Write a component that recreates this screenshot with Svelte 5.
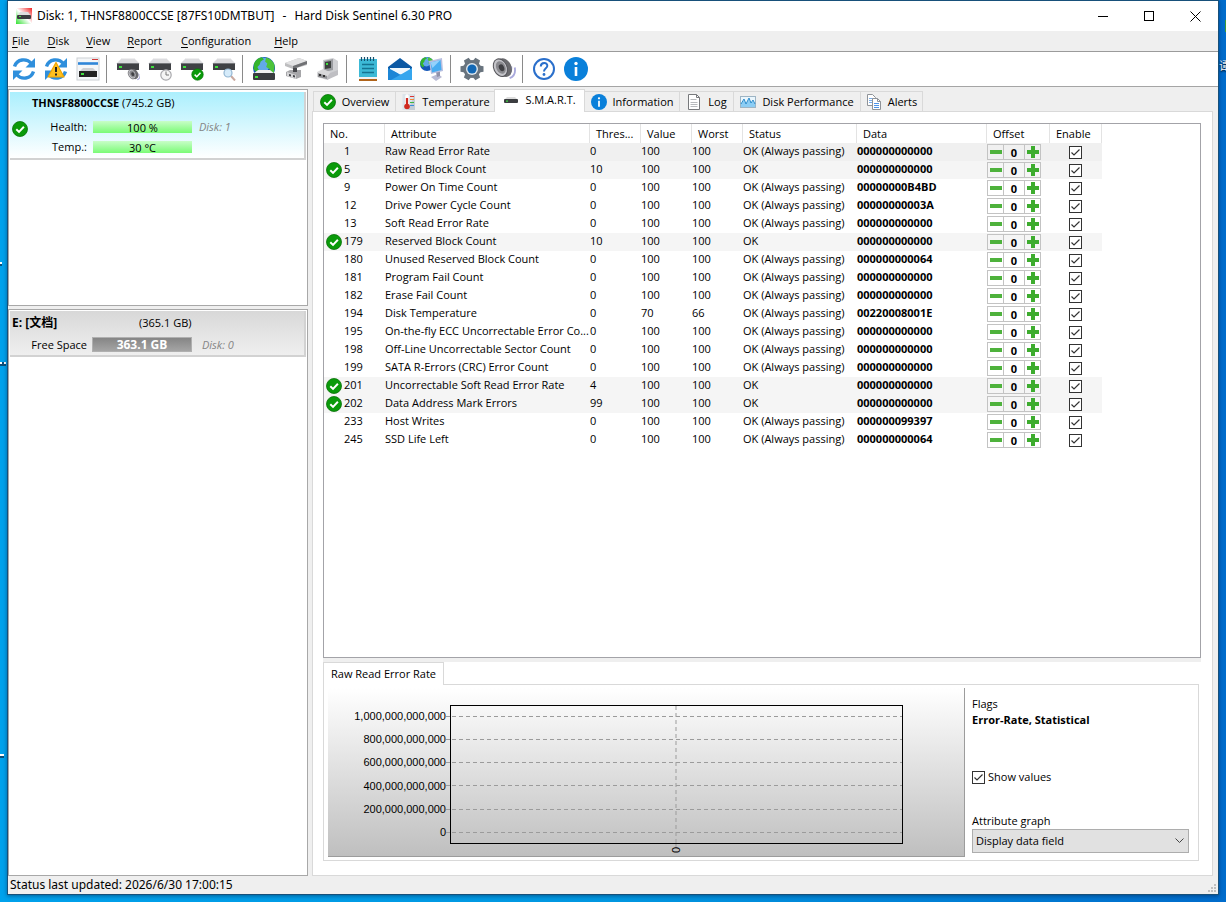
<script>
  const menus = [
    { label: 'File', gap: 18 },
    { label: 'Disk', gap: 17 },
    { label: 'View', gap: 17 },
    { label: 'Report', gap: 19 },
    { label: 'Configuration', gap: 23 },
    { label: 'Help', gap: 0 }
  ];

  const tools = [
    ['refresh', 'Refresh'], ['refreshWarn', 'Rescan'], ['panel', 'Disk panel'], null,
    ['diskSound', 'Acoustic'], ['diskClock', 'Short test'], ['diskOk', 'Extended test'], ['diskFind', 'Surface test'], null,
    ['globe', 'Network disk'], ['plug', 'Connectors'], ['dock', 'Docking'], null,
    ['note', 'Report'], ['mail', 'Send report'], ['net', 'Remote'], null,
    ['gear', 'Configuration'], ['speaker', 'Sounds'], null,
    ['help', 'Help'], ['info', 'About']
  ];

  const tabs = [
    { icon: 'ok', label: 'Overview', width: 83 },
    { icon: 'thermo', label: 'Temperature', width: 100 },
    { icon: 'drive', label: 'S.M.A.R.T.', width: 91 },
    { icon: 'info', label: 'Information', width: 96 },
    { icon: 'log', label: 'Log', width: 55 },
    { icon: 'perf', label: 'Disk Performance', width: 128 },
    { icon: 'copy', label: 'Alerts', width: 63 }
  ];
  let activeTab = $state('S.M.A.R.T.');

  const columns = [
    ['No.', 61], ['Attribute', 205], ['Thres...', 51], ['Value', 51], ['Worst', 51],
    ['Status', 114], ['Data', 130], ['Offset', 63], ['Enable', 52]
  ];

  const passing = 'OK (Always passing)';
  const rows = $state([
    [1, 'Raw Read Error Rate', 0, 100, 100, passing, '000000000000'],
    [5, 'Retired Block Count', 10, 100, 100, 'OK', '000000000000'],
    [9, 'Power On Time Count', 0, 100, 100, passing, '00000000B4BD'],
    [12, 'Drive Power Cycle Count', 0, 100, 100, passing, '00000000003A'],
    [13, 'Soft Read Error Rate', 0, 100, 100, passing, '000000000000'],
    [179, 'Reserved Block Count', 10, 100, 100, 'OK', '000000000000'],
    [180, 'Unused Reserved Block Count', 0, 100, 100, passing, '000000000064'],
    [181, 'Program Fail Count', 0, 100, 100, passing, '000000000000'],
    [182, 'Erase Fail Count', 0, 100, 100, passing, '000000000000'],
    [194, 'Disk Temperature', 0, 70, 66, passing, '00220008001E'],
    [195, 'On-the-fly ECC Uncorrectable Error Co...', 0, 100, 100, passing, '000000000000'],
    [198, 'Off-Line Uncorrectable Sector Count', 0, 100, 100, passing, '000000000000'],
    [199, 'SATA R-Errors (CRC) Error Count', 0, 100, 100, passing, '000000000000'],
    [201, 'Uncorrectable Soft Read Error Rate', 4, 100, 100, 'OK', '000000000000'],
    [202, 'Data Address Mark Errors', 99, 100, 100, 'OK', '000000000000'],
    [233, 'Host Writes', 0, 100, 100, passing, '000000099397'],
    [245, 'SSD Life Left', 0, 100, 100, passing, '000000000064']
  ].map(([no, name, limit, value, worst, status, data]) => (
    { no, name, limit, value, worst, status, data, offset: 0, enabled: true }
  )));

  const ticks = ['1,000,000,000,000', '800,000,000,000', '600,000,000,000', '400,000,000,000', '200,000,000,000', '0'];
  const gridY = [11, 34, 57, 80, 104, 127];
  let showValues = $state(true);
</script>

{#snippet disk(y)}
  <g transform="translate(0 {y})">
    <path d="M6 0h12l6 6H0z" fill="#dcdcdf" />
    <path d="M6 0h12l1 1H5z" fill="#efeff0" />
    <rect x="1" y="5" width="22" height="7" fill="#3f4145" />
    <rect x="1" y="5" width="22" height="1" fill="#77797d" />
    <rect x="3" y="8" width="3" height="2" fill="#3fe03f" />
  </g>
{/snippet}

{#snippet check(x, y, r)}
  <g transform="translate({x} {y}) scale({r / 8})">
    <circle r="7.7" fill="#0a9a0a" stroke="#077007" stroke-width=".8" />
    <path d="M-3.8.2-1 3l5-5.3" fill="none" stroke="#fff" stroke-width="2" />
  </g>
{/snippet}

{#snippet arrows()}
  <g fill="none" stroke="#2f8fdc" stroke-width="3.4">
    <path d="M2.5 9.5C5 1.800 14.500.800 19.500 6.500" />
    <path d="M21.500 14.500C19 22.200 9.500 23.200 4.500 17.500" />
  </g>
  <path d="M23 1v9.500h-9.500z" fill="#2f8fdc" />
  <path d="M1 23v-9.500h9.500z" fill="#2f8fdc" />
{/snippet}

{#snippet globe(x, y, r)}
  <g transform="translate({x} {y}) scale({r / 10})">
    <circle r="10" fill="#1457b8" />
    <circle cx="-1" cy="-3" r="6.500" fill="#7cc4fa" opacity=".75" />
    <path d="M-9-4Q-7-9-2-9.800L0-8-3-6-4-3-6-1-4 3-6 5-9.500 1z" fill="#35b52c" />
    <path d="M2-9.500Q8-8 9.700-2L9 4 6 6 5 1 2-1 3-4 1-6z" fill="#4cc33a" />
  </g>
{/snippet}

{#snippet speaker(x, y, s)}
  <g transform="translate({x} {y}) scale({s})">
    <path d="M5 7Q10 5 9-1M7.500 10.500Q14 8 12.500 0" fill="none" stroke="#a9a9dc" stroke-width="1.800" />
    <ellipse cx="2" cy="1" rx="7" ry="9.500" fill="#6a6a6e" transform="rotate(-25)" />
    <ellipse cx="-1.500" cy="-.5" rx="6.500" ry="9" fill="#c4c4c9" stroke="#55555a" transform="rotate(-25)" />
    <ellipse cx="-1" cy="-.5" rx="4.500" ry="6.500" fill="#8a8a8f" transform="rotate(-25)" />
    <ellipse cx="-.5" cy="0" rx="2.500" ry="3.500" fill="#3f3f43" transform="rotate(-25)" />
  </g>
{/snippet}

{#snippet icon(name, size)}
  {#if name === 'refresh'}
    <svg width={size} height={size} viewBox="0 0 24 24" aria-hidden="true">{@render arrows()}</svg>
  {:else if name === 'refreshWarn'}
    <svg width={size} height={size} viewBox="0 0 24 24" aria-hidden="true">
      {@render arrows()}
      <path d="M12 5.500 20 20H4z" fill="#ffc01e" stroke="#f0a400" stroke-width="1.200" stroke-linejoin="round" />
      <path d="M12 10v5M12 16.500v2" stroke="#222" stroke-width="2" />
    </svg>
  {:else if name === 'panel'}
    <svg width={size} height={size} viewBox="0 0 24 24" aria-hidden="true">
      <rect x="1" y="1" width="22" height="22" fill="#f4f6f8" stroke="#ccd0d4" />
      <path d="M16 2.500h6" stroke="#d23b3b" />
      <path d="M2 6.500h20" stroke="#2f86d8" stroke-width="2.600" />
      <path d="M7 11h10l4 4H3z" fill="#cfd0d3" />
      <rect x="3" y="14" width="18" height="6" fill="#222" />
      <rect x="5" y="16" width="3" height="2" fill="#3fe03f" />
    </svg>
  {:else if name === 'diskSound'}
    <svg width={size} height={size} viewBox="0 0 24 24" aria-hidden="true">{@render disk(1)}{@render speaker(17, 17, 0.56)}</svg>
  {:else if name === 'diskClock'}
    <svg width={size} height={size} viewBox="0 0 24 24" aria-hidden="true">
      {@render disk(1)}
      <circle cx="18" cy="18" r="5.200" fill="#f5f5f5" stroke="#a9a9ad" stroke-width="1.200" />
      <path d="M18 14.500V18h3" fill="none" stroke="#777" />
    </svg>
  {:else if name === 'diskOk'}
    <svg width={size} height={size} viewBox="0 0 24 24" aria-hidden="true">{@render disk(1)}{@render check(17.5, 17.5, 6)}</svg>
  {:else if name === 'diskFind'}
    <svg width={size} height={size} viewBox="0 0 24 24" aria-hidden="true">
      {@render disk(1)}
      <path d="m19 19 4 4.500" stroke="#c9a9a0" stroke-width="2" />
      <circle cx="16" cy="16" r="4" fill="#d5ebfa" stroke="#93b6d2" stroke-width="1.200" />
    </svg>
  {:else if name === 'globe'}
    <svg width={size} height={size} viewBox="0 0 24 24" aria-hidden="true">
      {@render globe(12, 11, 11)}
      <path d="M6 13h12l5 4H1z" fill="#f0f0f1" />
      <rect x="1" y="16" width="22" height="7" rx="1" fill="#3a3c40" />
      <rect x="3" y="19" width="3" height="2" fill="#3fe03f" />
    </svg>
  {:else if name === 'plug'}
    <svg width={size} height={size} viewBox="0 0 24 24" aria-hidden="true">
      <path d="m1 6 14-5 8 3v4L9 12 1 9z" fill="#bdbdbf" />
      <path d="m1 6 14-5 8 3-14 5z" fill="#e2e2e3" />
      <path d="m9 9 14-5v3L9 12z" fill="#707174" />
      <path d="m2 15 4-2 11 0v7l-5 2-10-3z" fill="#a6a6a9" />
      <path d="m3 15 9 3v4l-9-3z" fill="#d6d6d8" />
      <path d="m5 17 2 .5v2l-2-.5zM9 18l2 .5v2L9 20zM9 11h4v4H9z" fill="#45464a" />
    </svg>
  {:else if name === 'dock'}
    <svg width={size} height={size} viewBox="0 0 24 24" aria-hidden="true">
      <path d="m7 3 10-2 5 3v13l-9 3-6-4z" fill="#d0d1d4" />
      <path d="m8 4 9-2v11l-9 2z" fill="#9a9ca0" />
      <path d="m9 5 6-1v7l-6 1z" fill="#3c403e" />
      <rect x="10" y="6" width="2" height="2" fill="#3fe03f" />
      <path d="m1 15 6-3 7 3v6l-3 2-10-3z" fill="#d8d8da" />
      <path d="m2 16 9 3v3l-9-2z" fill="#909195" />
      <path d="M3 17h2v2H3zM7 18h2v2H7z" fill="#333" />
      <path d="m14 16 8-3v5l-11 5v-3z" fill="#bfbfc3" />
    </svg>
  {:else if name === 'note'}
    <svg width={size} height={size} viewBox="0 0 24 24" aria-hidden="true">
      <rect x="3" y="2" width="18" height="18" fill="#3cb9d6" />
      <path d="M3 20h18v2H3z" fill="#f2f2f2" />
      <path d="M3 22h18v2H3z" fill="#b0641b" />
      <path d="M6 7.500h12M6 11.500h12M6 15.500h12" stroke="#147391" stroke-width="1.500" />
      <path d="M5.500 0v4M8.500 0v4M11.500 0v4M14.500 0v4M17.500 0v4" stroke="#14506e" stroke-width="1.200" />
    </svg>
  {:else if name === 'mail'}
    <svg width={size} height={size} viewBox="0 0 24 24" aria-hidden="true">
      <path d="M0 10 12 1l12 9v13H0z" fill="#0c59a4" />
      <path d="M2 11h20v4l-10 5-10-5z" fill="#eef7fd" />
      <path d="M0 11v12h24z" fill="#1c86d6" />
      <path d="M24 11v12H3l9-5z" fill="#35a6ee" />
      <path d="m2 11 10 6.500L22 11z" fill="#f0f8fd" />
    </svg>
  {:else if name === 'net'}
    <svg width={size} height={size} viewBox="0 0 24 24" aria-hidden="true">
      {@render globe(7, 7, 7)}
      <path d="m11 20 7-3 4 3-6 4z" fill="#b9bbd4" />
      <path d="m16 15 4-1v5l-3 1z" fill="#9091aa" />
      <path d="m9 4 13-3 1 13-12 3z" fill="#b9bfe0" />
      <path d="m10.500 5.500 10-2.500 1 10-9.500 2.500z" fill="#46acf0" />
      <path d="m10.500 5.500 10-2.500-8 8z" fill="#94d2fb" />
    </svg>
  {:else if name === 'gear'}
    <svg width={size} height={size} viewBox="0 0 24 24" aria-hidden="true">
      <g fill="#69747e">
        <circle cx="12" cy="12" r="9" />
        {#each [0, 60, 120, 180, 240, 300] as a}
          <path d="m8.500 5 .8-4.500h5.400l.8 4.500z" transform="rotate({a + 30} 12 12)" />
        {/each}
      </g>
      <circle cx="12" cy="12" r="6" fill="#dfe8ef" />
      <circle cx="12" cy="12" r="4.600" fill="#1268b5" />
    </svg>
  {:else if name === 'speaker'}
    <svg width={size} height={size} viewBox="0 0 24 24" aria-hidden="true">{@render speaker(10, 10.5, 1.02)}</svg>
  {:else if name === 'help'}
    <svg width={size} height={size} viewBox="0 0 24 24" aria-hidden="true">
      <circle cx="12" cy="12" r="10" fill="#fff" stroke="#2a6fcb" stroke-width="2" />
      <path d="M8.800 9.500C8.800 4.800 15.800 5 15.300 9c-.3 2.300-3.300 2.300-3.300 5.500" fill="none" stroke="#2a6fcb" stroke-width="2" />
      <circle cx="12" cy="17.500" r="1.400" fill="#2a6fcb" />
    </svg>
  {:else if name === 'info'}
    <svg width={size} height={size} viewBox="0 0 24 24" aria-hidden="true">
      <circle cx="12" cy="12" r="12" fill="#0a80da" />
      <circle cx="12" cy="6.500" r="1.700" fill="#fff" />
      <path d="M12 10v9" stroke="#fff" stroke-width="2.600" />
    </svg>
  {:else if name === 'ok'}
    <svg width={size} height={size} viewBox="0 0 16 16" aria-hidden="true">{@render check(8, 8, 7.8)}</svg>
  {:else if name === 'thermo'}
    <svg width={size} height={size} viewBox="0 0 16 16" aria-hidden="true">
      <rect x="2.500" width="12.500" height="16" fill="#dce4ea" />
      <path d="M15 0v16H8z" fill="#c3ccd4" />
      <path d="M10 2.500h4" stroke="#d33" /><path d="M10 5.500h4" stroke="#f08a3a" /><path d="M10 8.500h4" stroke="#3eb83e" /><path d="M10 11.500h4" stroke="#388adb" />
      <path d="M7 2v9" stroke="#fff" stroke-width="3.500" stroke-linecap="round" />
      <path d="M7 4v8" stroke="#cf2a20" stroke-width="2.200" />
      <circle cx="7" cy="12.500" r="2.800" fill="#cf2a20" />
    </svg>
  {:else if name === 'drive'}
    <svg width={size} height={size} viewBox="0 0 16 16" aria-hidden="true">
      <path d="M4 5h8l3 3H1z" fill="#ddd" />
      <rect x="1" y="7" width="14" height="4" rx="1" fill="#3b3d40" />
      <rect x="3" y="8.500" width="2" height="1.200" fill="#3fe03f" />
    </svg>
  {:else if name === 'log'}
    <svg width={size} height={size} viewBox="0 0 16 16" aria-hidden="true">
      <path d="M2.500.500h8l3 3v12h-11z" fill="#fff" stroke="#77797c" />
      <path d="M10.500.500v3h3" fill="none" stroke="#77797c" />
      <path d="M4.500 5.500h6M4.500 8.500h7M4.500 10.500h7M4.500 12.500h7" stroke="#b8babd" />
    </svg>
  {:else if name === 'perf'}
    <svg width={size} height={size} viewBox="0 0 16 16" aria-hidden="true">
      <rect x=".5" y="2.500" width="15" height="11" fill="#eaf6fd" stroke="#9db4c4" />
      <path d="M1 10 4 6l2 4 3-5 2 4 2-2 2 3v3H1z" fill="#8ccdf4" />
      <path d="m1 10 3-5 2 5 3-6 2 5 2-3 2 4" fill="none" stroke="#2b8ccc" />
    </svg>
  {:else if name === 'copy'}
    <svg width={size} height={size} viewBox="0 0 16 16" aria-hidden="true">
      <path d="M1.500.500h5l3 3v8h-8z" fill="#fff" stroke="#8f9398" />
      <path d="M3 4.500h4M3 6.500h4M3 8.500h4" stroke="#7aaeea" />
      <path d="M6.500 4.500h5l3 3v8h-8z" fill="#fff" stroke="#8f9398" />
      <path d="M11.500 4.500v3h3" fill="none" stroke="#8f9398" />
      <path d="M8 9.500h5M8 11.500h5M8 13.500h5" stroke="#4e94e8" />
    </svg>
  {/if}
{/snippet}

<div class="desktop">
  <span class="scrap s1"></span>
  <span class="scrap s2"></span>
  <span class="scrap s3"></span>
  <span class="leaf"></span>
  <span class="desk-label">谭</span>

  <div class="window">
    <header class="title">
      <svg width="16" height="16" viewBox="0 0 16 16" aria-hidden="true">
        <defs>
          <linearGradient id="appbg" x1="0" y1="1" x2="1" y2="0">
            <stop offset="0" stop-color="#2fe02f" /><stop offset=".5" stop-color="#fff" /><stop offset="1" stop-color="#f02020" />
          </linearGradient>
        </defs>
        <rect width="16" height="16" fill="url(#appbg)" />
        <path d="M4 4h8l3 4H1z" fill="#dedede" />
        <rect x="1" y="7" width="14" height="4" rx="1" fill="#3b3d40" />
        <rect x="3" y="8" width="2" height="1" fill="#3fe03f" />
      </svg>
      <h1><span>Disk: 1, THNSF8800CCSE [87FS10DMTBUT]</span><span>-</span><span>Hard Disk Sentinel 6.30 PRO</span></h1>
      <div class="caption">
        <button aria-label="Minimize"><svg width="11" height="11" aria-hidden="true"><path d="M0 5.500h10" stroke="#000" /></svg></button>
        <button aria-label="Maximize"><svg width="11" height="11" aria-hidden="true"><rect x=".5" y=".5" width="9" height="9" fill="none" stroke="#000" /></svg></button>
        <button aria-label="Close"><svg width="11" height="11" aria-hidden="true"><path d="m.5.500 10 10m0-10-10 10" stroke="#000" /></svg></button>
      </div>
    </header>

    <nav class="menu">
      {#each menus as m}
        <button style="margin-right: {m.gap}px"><u>{m.label[0]}</u>{m.label.slice(1)}</button>
      {/each}
    </nav>

    <div class="toolbar">
      {#each tools as t}
        {#if t}
          <button aria-label={t[1]}>{@render icon(t[0], 24)}</button>
        {:else}
          <span class="sep"></span>
        {/if}
      {/each}
    </div>

    <div class="body">
      <aside>
        <section class="pane disks">
          <div class="card selected">
            <div class="name"><b>THNSF8800CCSE</b> (745.2 GB)</div>
            <div class="stats">
              <span class="state">{@render icon('ok', 16)}</span>
              <span class="lbl">Health:</span><span class="bar green">100 %</span><i>Disk: 1</i>
              <span class="lbl">Temp.:</span><span class="bar green">30 °C</span>
            </div>
          </div>
        </section>
        <section class="pane volumes">
          <div class="card volume">
            <div class="vname"><b>E: [文档]</b><span>(365.1 GB)</span></div>
            <div class="vrow"><span class="lbl">Free Space</span><span class="bar gray">363.1 GB</span><i>Disk: 0</i></div>
          </div>
        </section>
      </aside>

      <main>
        <div class="tabs" role="tablist">
          {#each tabs as t}
            <button role="tab" class:active={activeTab === t.label} aria-selected={activeTab === t.label}
              style="width: {t.width}px" onclick={() => (activeTab = t.label)}>
              {@render icon(t.icon, 16)}<span>{t.label}</span>
            </button>
          {/each}
        </div>

        <div class="page">
          <div class="list">
            <table>
              <colgroup>
                {#each columns as c}<col style="width: {c[1]}px" />{/each}
              </colgroup>
              <thead>
                <tr>{#each columns as c}<th>{c[0]}</th>{/each}</tr>
              </thead>
              <tbody>
                {#each rows as r, i}
                  <tr class:current={i === 0} class:critical={r.status === 'OK'}>
                    <td><div class="no"><span>{#if r.status === 'OK'}{@render icon('ok', 16)}{/if}</span>{r.no}</div></td>
                    <td>{r.name}</td>
                    <td>{r.limit}</td>
                    <td>{r.value}</td>
                    <td>{r.worst}</td>
                    <td>{r.status}</td>
                    <td><b>{r.data}</b></td>
                    <td class="control">
                      <div class="offset">
                        <button aria-label="Decrease offset" onclick={() => r.offset--}>
                          <svg width="12" height="12" aria-hidden="true"><path d="M0 4h12v4H0z" fill="#4eb23c" /></svg>
                        </button>
                        <b>{r.offset}</b>
                        <button aria-label="Increase offset" onclick={() => r.offset++}>
                          <svg width="12" height="12" aria-hidden="true"><path d="M4 0h4v4h4v4H8v4H4V8H0V4h4z" fill="#3dac2e" /></svg>
                        </button>
                      </div>
                    </td>
                    <td class="control enable"><input type="checkbox" aria-label="Enable {r.name}" bind:checked={r.enabled} /></td>
                  </tr>
                {/each}
              </tbody>
            </table>
          </div>
          <div class="splitter"></div>

          <div class="subtabs"><button role="tab" aria-selected="true">Raw Read Error Rate</button></div>
          <div class="detail">
            <div class="chart">
              <div class="ticks">{#each ticks as t}<span>{t}</span>{/each}</div>
              <div class="plotbox">
                <svg class="plot" width="100%" height="139" aria-label="Raw Read Error Rate graph">
                  <g stroke="#9b9b9b">
                    {#each gridY as y}
                      <line x1="-4" x2="0" y1={y + 0.5} y2={y + 0.5} />
                      <line x1="2" x2="100%" y1={y + 0.5} y2={y + 0.5} stroke-dasharray="4 3" />
                    {/each}
                    <line x1="50%" x2="50%" y1="1" y2="138" stroke-dasharray="4 3" />
                    <line x1="50%" x2="50%" y1="139" y2="143" />
                  </g>
                  <rect x=".5" y=".5" width="100%" height="138" fill="none" stroke="#000" />
                </svg>
                <span class="xlabel">0</span>
              </div>
            </div>
            <div class="options">
              <div>Flags</div>
              <b>Error-Rate, Statistical</b>
              <label class="show"><input type="checkbox" bind:checked={showValues} />Show values</label>
              <label for="graph">Attribute graph</label>
              <select id="graph"><option>Display data field</option></select>
            </div>
          </div>
        </div>
      </main>
    </div>

    <footer>
      <span>Status last updated: 2026/6/30 17:00:15</span>
      <svg width="8" height="8" aria-hidden="true"><path d="M6 0h2v2H6zM3 3h2v2H3zM6 3h2v2H6zM0 6h2v2H0zM3 6h2v2H3zM6 6h2v2H6z" fill="#bfbfbf" /></svg>
    </footer>
  </div>
</div>

<style>
  :global(body) {
    margin: 0;
  }
  * {
    box-sizing: border-box;
  }
  button {
    font: inherit;
    color: inherit;
    background: none;
    border: 0;
    padding: 0;
    margin: 0;
  }
  svg {
    display: block;
    flex: none;
  }
  .desktop {
    position: relative;
    display: flex;
    min-height: 100vh;
    padding: 0 7px 7px;
    overflow: hidden;
    background: linear-gradient(90deg, #00a2ec, #0098e2 50%, #006ccc);
    font: 11px/16px "Open Sans", "Noto Sans CJK SC", sans-serif;
    color: #000;
  }
  .scrap {
    position: absolute;
    left: 0;
    width: 6px;
    border-top: 2px dotted #fff;
    background: #0b4f7a;
    height: 4px;
  }
  .s1 { top: 262px; width: 2px; }
  .s2 { top: 362px; }
  .s3 { top: 754px; width: 4px; }
  .leaf {
    position: absolute;
    right: 0;
    top: 20px;
    width: 1px;
    height: 12px;
    background: #3a9a36;
  }
  .desk-label {
    position: absolute;
    left: calc(100% - 7px);
    top: 58px;
    color: #fff;
    text-shadow: 0 1px 2px #000;
  }
  .window {
    position: relative;
    flex: 1;
    min-width: 0;
    display: flex;
    flex-direction: column;
    background: #efefef;
    border: 1px solid #17507a;
    box-shadow: 0 1px 4px rgba(0, 30, 70, 0.5);
  }
  .title {
    display: flex;
    align-items: center;
    height: 30px;
    padding-left: 8px;
    background: #fff;
  }
  h1 {
    display: flex;
    gap: 8px;
    margin: 0 0 0 5px;
    flex: 1;
    font: 400 12px/16px "Noto Sans", "Noto Sans CJK SC", sans-serif;
  }
  .caption {
    display: flex;
  }
  .caption button {
    display: grid;
    place-items: center;
    width: 46px;
    height: 30px;
  }
  .menu {
    display: flex;
    align-items: center;
    height: 20px;
    padding-left: 4px;
  }
  .menu u {
    text-underline-offset: 2px;
  }
  .toolbar {
    display: flex;
    align-items: center;
    height: 36px;
    background: #fff;
    border-top: 1px solid #9b9b9b;
    border-bottom: 1px solid #a5a5a5;
  }
  .toolbar button {
    display: grid;
    place-items: center;
    width: 32px;
    height: 32px;
  }
  .sep {
    width: 8px;
    height: 28px;
    border-left: 1px solid #8a8a8a;
    margin-left: 2px;
    margin-right: -2px;
  }
  .body {
    flex: 1;
    display: flex;
    gap: 4px;
    padding-top: 2px;
  }
  aside {
    flex: none;
    width: 300px;
    display: flex;
    flex-direction: column;
    gap: 3px;
  }
  .pane {
    background: #fff;
    border: 1px solid #a8a8a8;
    padding: 2px 1px;
  }
  .disks {
    height: 217px;
  }
  .volumes {
    flex: 1;
    padding: 1px;
  }
  .card {
    border: solid #d2d2d2;
    border-width: 0 2px 2px 0;
  }
  .card i {
    color: #858585;
  }
  .selected {
    height: 68px;
    padding-top: 3px;
    background: linear-gradient(#abeffd, #fff);
  }
  .name {
    padding-left: 22px;
  }
  .stats {
    display: grid;
    grid-template-columns: 21px 61px 99px 1fr;
    grid-auto-rows: 20px;
    align-items: center;
    padding: 6px 0 0 1px;
  }
  .stats i {
    padding-left: 7px;
  }
  .state {
    padding: 4px 0 0 1px;
  }
  .stats .lbl {
    grid-column: 2;
    padding-right: 6px;
    text-align: right;
  }
  .stats .bar {
    grid-column: 3;
  }
  .bar {
    text-align: center;
  }
  .green {
    height: 12px;
    line-height: 14px;
    background: linear-gradient(#c8fec8, #7bfb76);
  }
  .volume {
    height: 46px;
    padding: 1px 0 0 2px;
    background: linear-gradient(#d8d8d8, #efefef);
  }
  .vname {
    display: flex;
    height: 24px;
    line-height: 22px;
  }
  .vname b {
    width: 127px;
    font-size: 12px;
  }
  .vrow {
    display: flex;
    align-items: center;
    height: 17px;
  }
  .vrow .lbl {
    width: 75px;
    margin-right: 5px;
    text-align: right;
  }
  .gray {
    width: 100px;
    height: 15px;
    line-height: 13px;
    border: 1px solid #b0b0b0;
    background: linear-gradient(#858585, #a5a5a5);
    color: #fff;
    font-weight: 700;
    font-size: 12px;
  }
  .vrow i {
    padding-left: 10px;
  }
  main {
    flex: 1;
    min-width: 0;
    display: flex;
    flex-direction: column;
    padding-right: 5px;
  }
  .tabs {
    display: flex;
    align-items: flex-end;
    height: 22px;
    padding-left: 1px;
  }
  .tabs button {
    display: flex;
    align-items: center;
    justify-content: center;
    gap: 6px;
    height: 20px;
    border: 1px solid #d9d9d9;
    border-bottom: 0;
    margin-right: -1px;
    white-space: nowrap;
  }
  .tabs button.active {
    height: 23px;
    margin-bottom: -1px;
    padding-bottom: 2px;
    background: #fff;
    z-index: 1;
  }
  .page {
    flex: 1;
    display: flex;
    flex-direction: column;
    padding: 11px 11px 14px 10px;
    background: #fff;
    border: 1px solid #d9d9d9;
  }
  .list {
    flex: 1;
    border: 1px solid #a3a3a8;
  }
  table {
    table-layout: fixed;
    width: 778px;
    border-collapse: separate;
    border-spacing: 0;
  }
  th,
  td {
    padding: 0;
    height: 18px;
    line-height: 16px;
    font-weight: 400;
    text-align: left;
    white-space: nowrap;
  }
  td {
    padding-bottom: 2px;
  }
  td.control {
    padding-top: 1px;
    padding-bottom: 1px;
  }
  th {
    height: 19px;
    padding-left: 6px;
    border-right: 1px solid #e3e3e3;
  }
  .current {
    background: #f0f0f0;
  }
  .critical {
    background: #f5f5f5;
  }
  .no {
    display: flex;
    align-items: center;
    height: 16px;
  }
  .no span {
    width: 18px;
    margin-left: 2px;
  }
  .no :global(svg) {
    margin-top: 1px;
  }
  .offset {
    display: flex;
    width: 54px;
    height: 16px;
    border: 1px solid #c3c3c3;
  }
  .offset button {
    display: grid;
    place-items: center;
    width: 15px;
  }
  .offset b {
    flex: 1;
    line-height: 15px;
    text-align: center;
    border: solid #c3c3c3;
    border-width: 0 1px;
  }
  td.enable {
    padding-left: 19px;
  }
  input[type="checkbox"] {
    appearance: none;
    display: block;
    width: 13px;
    height: 13px;
    margin: 0;
    border: 1px solid #333;
    background: #fff;
  }
  input[type="checkbox"]:checked {
    background: #fff url("data:image/svg+xml,%3Csvg xmlns='http://www.w3.org/2000/svg' width='11' height='11'%3E%3Cpath d='M1.500 5.500 4 8l5.500-5.500' fill='none' stroke='%23333' stroke-width='1.200'/%3E%3C/svg%3E");
  }
  .splitter {
    height: 4px;
    background: #efefef;
  }
  .subtabs {
    display: flex;
    height: 22px;
  }
  .subtabs button {
    height: 23px;
    padding: 0 7px;
    border: 1px solid #d9d9d9;
    border-bottom: 0;
    background: #fff;
    z-index: 1;
  }
  .detail {
    display: flex;
    height: 177px;
    margin-right: 2px;
    padding: 3px 3px 3px 4px;
    border: 1px solid #d9d9d9;
  }
  .chart {
    flex: 1;
    display: flex;
    padding: 17px 62px 0 0;
    background: linear-gradient(#fff, #bfbfbf);
    border: solid #9c9c9c;
    border-width: 0 1px 1px 0;
  }
  .ticks {
    display: flex;
    flex-direction: column;
    justify-content: space-between;
    width: 122px;
    height: 128px;
    padding-right: 4px;
    margin-top: 5px;
    font: 11px/12px "Liberation Sans", Arial, sans-serif;
    text-align: right;
  }
  .plotbox {
    flex: 1;
    display: flex;
    flex-direction: column;
    align-items: center;
  }
  .plot {
    overflow: visible;
  }
  .xlabel {
    height: 12px;
    width: 12px;
    font: 11px/12px "Liberation Sans", Arial, sans-serif;
    text-align: center;
    transform: rotate(-90deg);
  }
  .options {
    display: flex;
    flex-direction: column;
    width: 230px;
    padding: 8px 0 0 7px;
  }
  .options .show {
    display: flex;
    align-items: center;
    gap: 3px;
    margin: 41px 0 28px;
  }
  select {
    appearance: none;
    width: 217px;
    height: 24px;
    padding: 0 3px;
    border: 1px solid #adadad;
    border-radius: 0;
    background: #e1e1e1 url("data:image/svg+xml,%3Csvg xmlns='http://www.w3.org/2000/svg' width='9' height='6'%3E%3Cpath d='m.5.500 4 4 4-4' fill='none' stroke='%23444'/%3E%3C/svg%3E") no-repeat right 4px center;
    font: inherit;
    color: #000;
  }
  footer {
    display: flex;
    align-items: center;
    justify-content: space-between;
    height: 18px;
    padding: 0 2px;
    font: 12px/16px "Noto Sans", sans-serif;
  }
  footer svg {
    align-self: flex-end;
    margin-bottom: 2px;
  }
</style>
